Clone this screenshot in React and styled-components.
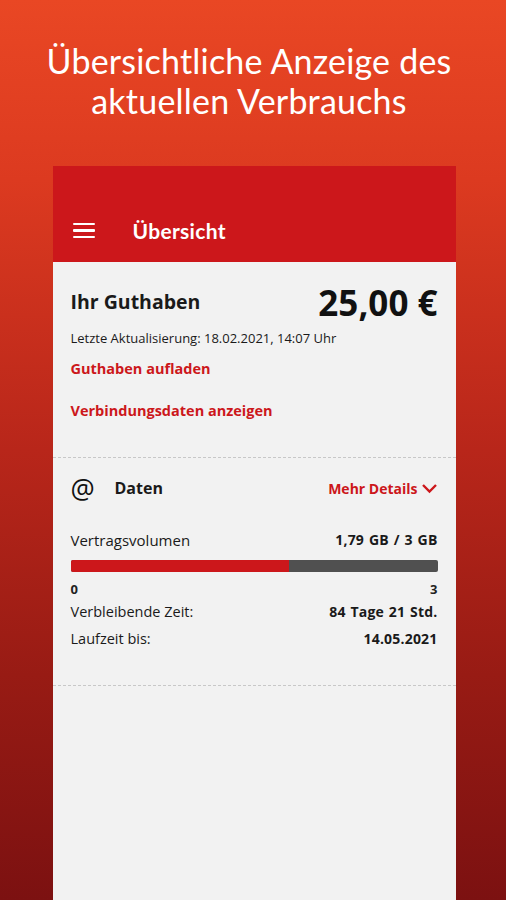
import React from 'react';
import styled, { createGlobalStyle } from 'styled-components';

const GlobalStyle = createGlobalStyle`
  html, body {
    margin: 0;
    padding: 0;
  }
  body {
    font-family: "Open Sans", Lato, sans-serif;
  }
`;

const Page = styled.div`
  width: 506px;
  height: 900px;
  overflow: hidden;
  display: flex;
  flex-direction: column;
  align-items: center;
  background: linear-gradient(180deg, #e94724 0%, #dc3a20 20%, #b8261a 50%, #981b14 75%, #7c1111 100%);
`;

const Headline = styled.h1`
  margin: 0;
  padding: 41px 8px 0 0;
  height: 124px;
  box-sizing: border-box;
  color: #fff;
  font-family: Lato, sans-serif;
  font-size: 34px;
  font-weight: 400;
  line-height: 40px;
  text-align: center;
  letter-spacing: 0.2px;
`;

const Phone = styled.div`
  width: 403px;
  flex: 1;
  margin-top: 42px;
  margin-left: 2px;
  background: #f2f2f2;
  display: flex;
  flex-direction: column;
`;

const AppBar = styled.div`
  height: 96px;
  background: #cc171b;
  display: flex;
  align-items: flex-end;
`;

const Toolbar = styled.div`
  height: 63px;
  width: 100%;
  display: flex;
  align-items: center;
  padding: 0 20px;
  box-sizing: border-box;
  gap: 38px;
`;

const Burger = styled.div`
  width: 22px;
  display: flex;
  flex-direction: column;
  gap: 4px;

  span {
    display: block;
    height: 2.5px;
    background: #fff;
    border-radius: 1px;
  }
`;

const BarTitle = styled.div`
  color: #fff;
  font-family: Lato, sans-serif;
  font-size: 21px;
  font-weight: 700;
  letter-spacing: 0.3px;
`;

const Section = styled.div`
  padding: ${p => p.$pad};
  border-bottom: 1px dashed #c8c8c8;
  display: flex;
  flex-direction: column;
`;

const Row = styled.div`
  display: flex;
  align-items: center;
  justify-content: space-between;
  margin-top: ${p => p.$mt || 0}px;
`;

const Label = styled.div`
  color: ${p => (p.$red ? '#cc171b' : '#1a1a1a')};
  font-size: ${p => p.$size || 14.5}px;
  font-weight: ${p => (p.$bold ? 700 : 400)};
  margin-top: ${p => p.$mt || 0}px;
  line-height: 1.25;
`;

const Value = styled.div`
  color: #1a1a1a;
  font-size: 14px;
  font-weight: 700;
  line-height: 1.25;
  letter-spacing: 0.2px;
  word-spacing: 1px;
`;

const Amount = styled.div`
  color: #111;
  font-size: 35px;
  font-weight: 700;
  line-height: 1;
`;

const Lead = styled.div`
  display: flex;
  align-items: center;
  gap: 20px;
`;

const At = styled.div`
  width: 24px;
  font-size: 27px;
  color: #111;
  line-height: 1;
  text-align: center;
`;

const DetailsLink = styled.div`
  display: flex;
  align-items: center;
  gap: 3px;
  color: #cc171b;
  font-size: 14px;
  font-weight: 700;
`;

const Track = styled.div`
  height: 12px;
  background: #505050;
  border-radius: 2px;
  overflow: hidden;
  margin-top: 11px;
`;

const Fill = styled.div`
  height: 100%;
  background: #cc171b;
`;

const Scale = styled.div`
  display: flex;
  justify-content: space-between;
  font-size: 13px;
  font-weight: 700;
  line-height: 1.25;
  color: #222;
  margin-top: 9px;
`;

const used = 1.79;
const total = 3;

export default function App() {
  return (
    <>
      <GlobalStyle />
      <Page>
        <Headline>
          Übersichtliche Anzeige des
          <br />
          aktuellen Verbrauchs
        </Headline>
        <Phone>
          <AppBar>
            <Toolbar>
              <Burger>
                <span />
                <span />
                <span />
              </Burger>
              <BarTitle>Übersicht</BarTitle>
            </Toolbar>
          </AppBar>

          <Section $pad="23px 18px 36px">
            <Row>
              <Label $size={19.5} $bold>Ihr Guthaben</Label>
              <Amount>25,00 €</Amount>
            </Row>
            <Label $size={13} $mt={10}>Letzte Aktualisierung: 18.02.2021, 14:07 Uhr</Label>
            <Label $red $bold $mt={14}>Guthaben aufladen</Label>
            <Label $red $bold $mt={24}>Verbindungsdaten anzeigen</Label>
          </Section>

          <Section $pad="17px 18px 37px">
            <Row>
              <Lead>
                <At>@</At>
                <Label $size={16} $bold>Daten</Label>
              </Lead>
              <DetailsLink>
                Mehr Details
                <svg width="17" height="12" viewBox="0 0 17 12">
                  <path d="M2 3 L8.5 9.5 L15 3" fill="none" stroke="#cc171b" strokeWidth="2.4" />
                </svg>
              </DetailsLink>
            </Row>
            <Row $mt={29}>
              <Label $size={15}>Vertragsvolumen</Label>
              <Value>1,79 GB / 3 GB</Value>
            </Row>
            <Track>
              <Fill style={{ width: `${(used / total) * 100}%` }} />
            </Track>
            <Scale>
              <span>0</span>
              <span>3</span>
            </Scale>
            <Row $mt={5}>
              <Label>Verbleibende Zeit:</Label>
              <Value>84 Tage 21 Std.</Value>
            </Row>
            <Row $mt={9}>
              <Label>Laufzeit bis:</Label>
              <Value>14.05.2021</Value>
            </Row>
          </Section>
        </Phone>
      </Page>
    </>
  );
}
